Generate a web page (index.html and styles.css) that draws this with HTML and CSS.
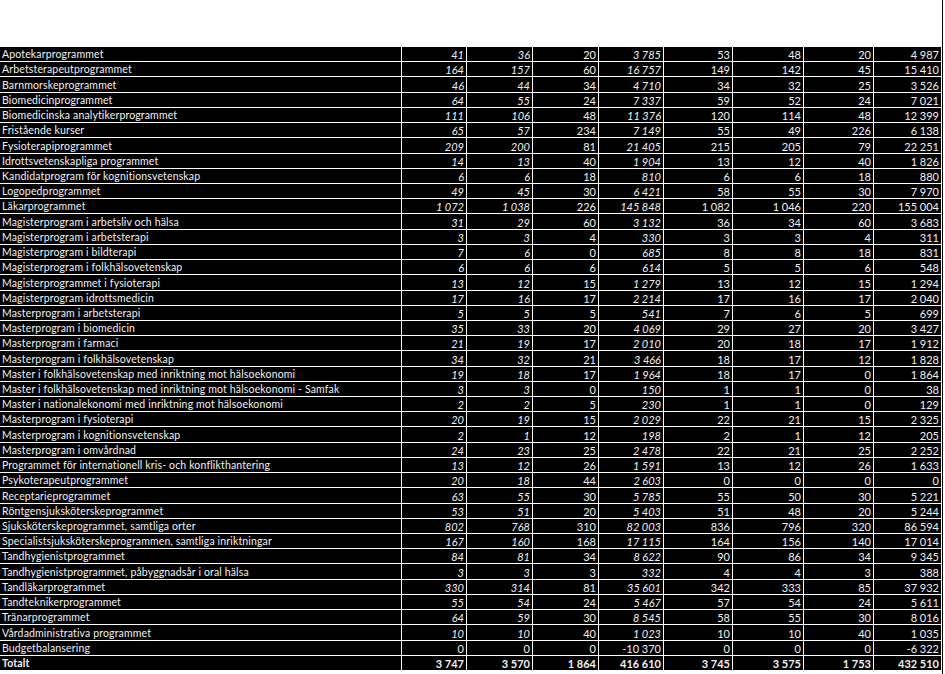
FILE: index.html
```html
<!DOCTYPE html>
<html lang="sv">
<head>
<meta charset="utf-8">
<title>Program</title>
<link rel="stylesheet" href="styles.css">
</head>
<body>
<div class="page">
  <div class="sheet">
    <div class="grid">
      <div class="n">Apotekarprogrammet</div><div class="i">41</div><div class="i">36</div><div>20</div><div class="i">3 785</div><div>53</div><div>48</div><div>20</div><div>4 987</div>
      <div class="n">Arbetsterapeutprogrammet</div><div class="i">164</div><div class="i">157</div><div>60</div><div class="i">16 757</div><div>149</div><div>142</div><div>45</div><div>15 410</div>
      <div class="n">Barnmorskeprogrammet</div><div class="i">46</div><div class="i">44</div><div>34</div><div class="i">4 710</div><div>34</div><div>32</div><div>25</div><div>3 526</div>
      <div class="n">Biomedicinprogrammet</div><div class="i">64</div><div class="i">55</div><div>24</div><div class="i">7 337</div><div>59</div><div>52</div><div>24</div><div>7 021</div>
      <div class="n">Biomedicinska analytikerprogrammet</div><div class="i">111</div><div class="i">106</div><div>48</div><div class="i">11 376</div><div>120</div><div>114</div><div>48</div><div>12 399</div>
      <div class="n">Fristående kurser</div><div class="i">65</div><div class="i">57</div><div>234</div><div class="i">7 149</div><div>55</div><div>49</div><div>226</div><div>6 138</div>
      <div class="n">Fysioterapiprogrammet</div><div class="i">209</div><div class="i">200</div><div>81</div><div class="i">21 405</div><div>215</div><div>205</div><div>79</div><div>22 251</div>
      <div class="n">Idrottsvetenskapliga programmet</div><div class="i">14</div><div class="i">13</div><div>40</div><div class="i">1 904</div><div>13</div><div>12</div><div>40</div><div>1 826</div>
      <div class="n">Kandidatprogram för kognitionsvetenskap</div><div class="i">6</div><div class="i">6</div><div>18</div><div class="i">810</div><div>6</div><div>6</div><div>18</div><div>880</div>
      <div class="n">Logopedprogrammet</div><div class="i">49</div><div class="i">45</div><div>30</div><div class="i">6 421</div><div>58</div><div>55</div><div>30</div><div>7 970</div>
      <div class="n">Läkarprogrammet</div><div class="i">1 072</div><div class="i">1 038</div><div>226</div><div class="i">145 848</div><div>1 082</div><div>1 046</div><div>220</div><div>155 004</div>
      <div class="n">Magisterprogram i arbetsliv och hälsa</div><div class="i">31</div><div class="i">29</div><div>60</div><div class="i">3 132</div><div>36</div><div>34</div><div>60</div><div>3 683</div>
      <div class="n">Magisterprogram i arbetsterapi</div><div class="i">3</div><div class="i">3</div><div>4</div><div class="i">330</div><div>3</div><div>3</div><div>4</div><div>311</div>
      <div class="n">Magisterprogram i bildterapi</div><div class="i">7</div><div class="i">6</div><div>0</div><div class="i">685</div><div>8</div><div>8</div><div>18</div><div>831</div>
      <div class="n">Magisterprogram i folkhälsovetenskap</div><div class="i">6</div><div class="i">6</div><div>6</div><div class="i">614</div><div>5</div><div>5</div><div>6</div><div>548</div>
      <div class="n">Magisterprogrammet i fysioterapi</div><div class="i">13</div><div class="i">12</div><div>15</div><div class="i">1 279</div><div>13</div><div>12</div><div>15</div><div>1 294</div>
      <div class="n">Magisterprogram idrottsmedicin</div><div class="i">17</div><div class="i">16</div><div>17</div><div class="i">2 214</div><div>17</div><div>16</div><div>17</div><div>2 040</div>
      <div class="n">Masterprogram i arbetsterapi</div><div class="i">5</div><div class="i">5</div><div>5</div><div class="i">541</div><div>7</div><div>6</div><div>5</div><div>699</div>
      <div class="n">Masterprogram i biomedicin</div><div class="i">35</div><div class="i">33</div><div>20</div><div class="i">4 069</div><div>29</div><div>27</div><div>20</div><div>3 427</div>
      <div class="n">Masterprogram i farmaci</div><div class="i">21</div><div class="i">19</div><div>17</div><div class="i">2 010</div><div>20</div><div>18</div><div>17</div><div>1 912</div>
      <div class="n">Masterprogram i folkhälsovetenskap</div><div class="i">34</div><div class="i">32</div><div>21</div><div class="i">3 466</div><div>18</div><div>17</div><div>12</div><div>1 828</div>
      <div class="n">Master i folkhälsovetenskap med inriktning mot hälsoekonomi</div><div class="i">19</div><div class="i">18</div><div>17</div><div class="i">1 964</div><div>18</div><div>17</div><div>0</div><div>1 864</div>
      <div class="n">Master i folkhälsovetenskap med inriktning mot hälsoekonomi - Samfak</div><div class="i">3</div><div class="i">3</div><div>0</div><div class="i">150</div><div>1</div><div>1</div><div>0</div><div>38</div>
      <div class="n">Master i nationalekonomi med inriktning mot hälsoekonomi</div><div class="i">2</div><div class="i">2</div><div>5</div><div class="i">230</div><div>1</div><div>1</div><div>0</div><div>129</div>
      <div class="n">Masterprogram i fysioterapi</div><div class="i">20</div><div class="i">19</div><div>15</div><div class="i">2 029</div><div>22</div><div>21</div><div>15</div><div>2 325</div>
      <div class="n">Masterprogram i kognitionsvetenskap</div><div class="i">2</div><div class="i">1</div><div>12</div><div class="i">198</div><div>2</div><div>1</div><div>12</div><div>205</div>
      <div class="n">Masterprogram i omvårdnad</div><div class="i">24</div><div class="i">23</div><div>25</div><div class="i">2 478</div><div>22</div><div>21</div><div>25</div><div>2 252</div>
      <div class="n">Programmet för internationell kris- och konflikthantering</div><div class="i">13</div><div class="i">12</div><div>26</div><div class="i">1 591</div><div>13</div><div>12</div><div>26</div><div>1 633</div>
      <div class="n">Psykoterapeutprogrammet</div><div class="i">20</div><div class="i">18</div><div>44</div><div class="i">2 603</div><div>0</div><div>0</div><div>0</div><div>0</div>
      <div class="n">Receptarieprogrammet</div><div class="i">63</div><div class="i">55</div><div>30</div><div class="i">5 785</div><div>55</div><div>50</div><div>30</div><div>5 221</div>
      <div class="n">Röntgensjuksköterskeprogrammet</div><div class="i">53</div><div class="i">51</div><div>20</div><div class="i">5 403</div><div>51</div><div>48</div><div>20</div><div>5 244</div>
      <div class="n">Sjuksköterskeprogrammet, samtliga orter</div><div class="i">802</div><div class="i">768</div><div>310</div><div class="i">82 003</div><div>836</div><div>796</div><div>320</div><div>86 594</div>
      <div class="n">Specialistsjuksköterskeprogrammen, samtliga inriktningar</div><div class="i">167</div><div class="i">160</div><div>168</div><div class="i">17 115</div><div>164</div><div>156</div><div>140</div><div>17 014</div>
      <div class="n">Tandhygienistprogrammet</div><div class="i">84</div><div class="i">81</div><div>34</div><div class="i">8 622</div><div>90</div><div>86</div><div>34</div><div>9 345</div>
      <div class="n">Tandhygienistprogrammet, påbyggnadsår i oral hälsa</div><div class="i">3</div><div class="i">3</div><div>3</div><div class="i">332</div><div>4</div><div>4</div><div>3</div><div>388</div>
      <div class="n">Tandläkarprogrammet</div><div class="i">330</div><div class="i">314</div><div>81</div><div class="i">35 601</div><div>342</div><div>333</div><div>85</div><div>37 932</div>
      <div class="n">Tandteknikerprogrammet</div><div class="i">55</div><div class="i">54</div><div>24</div><div class="i">5 467</div><div>57</div><div>54</div><div>24</div><div>5 611</div>
      <div class="n">Tränarprogrammet</div><div class="i">64</div><div class="i">59</div><div>30</div><div class="i">8 545</div><div>58</div><div>55</div><div>30</div><div>8 016</div>
      <div class="n">Vårdadministrativa programmet</div><div class="i">10</div><div class="i">10</div><div>40</div><div class="i">1 023</div><div>10</div><div>10</div><div>40</div><div>1 035</div>
      <div class="n">Budgetbalansering</div><div>0</div><div>0</div><div>0</div><div>-10 370</div><div>0</div><div>0</div><div>0</div><div>-6 322</div>
      <div class="n b">Totalt</div><div class="b">3 747</div><div class="b">3 570</div><div class="b">1 864</div><div class="b">416 610</div><div class="b">3 745</div><div class="b">3 575</div><div class="b">1 753</div><div class="b">432 510</div>
    </div>
  </div>
  <div class="edge"></div>
</div>
</body>
</html>
```
FILE: styles.css
```css
html, body {
  margin: 0;
  padding: 0;
  background: #ffffff;
}

.page {
  display: flex;
  height: 674px;
  width: 945px;
}

.sheet {
  width: 942px;
  padding-top: 47px;
  box-sizing: border-box;
}

.edge {
  width: 1px;
  background: #000000;
}

.grid {
  display: grid;
  grid-template-columns: 401px 64px 65px 65px 64px 68px 70px 69px 67px;
  grid-auto-rows: 14.22px;
  column-gap: 1px;
  row-gap: 1px;
  width: 941px;
  background: #ffffff;
  font-family: Lato, "Liberation Sans", sans-serif;
  font-size: 11px;
  line-height: 11px;
  color: #f2f2f2;
}

.grid > div {
  background: #000000;
  display: flex;
  align-items: flex-end;
  justify-content: flex-end;
  padding: 0 2px 1px 2px;
  white-space: nowrap;
  overflow: hidden;
}

.grid > .n {
  justify-content: flex-start;
  font-size: 10.5px;
  letter-spacing: 0.15px;
}

.grid > .i {
  font-style: italic;
}

.grid > .b {
  font-weight: 700;
}
```
